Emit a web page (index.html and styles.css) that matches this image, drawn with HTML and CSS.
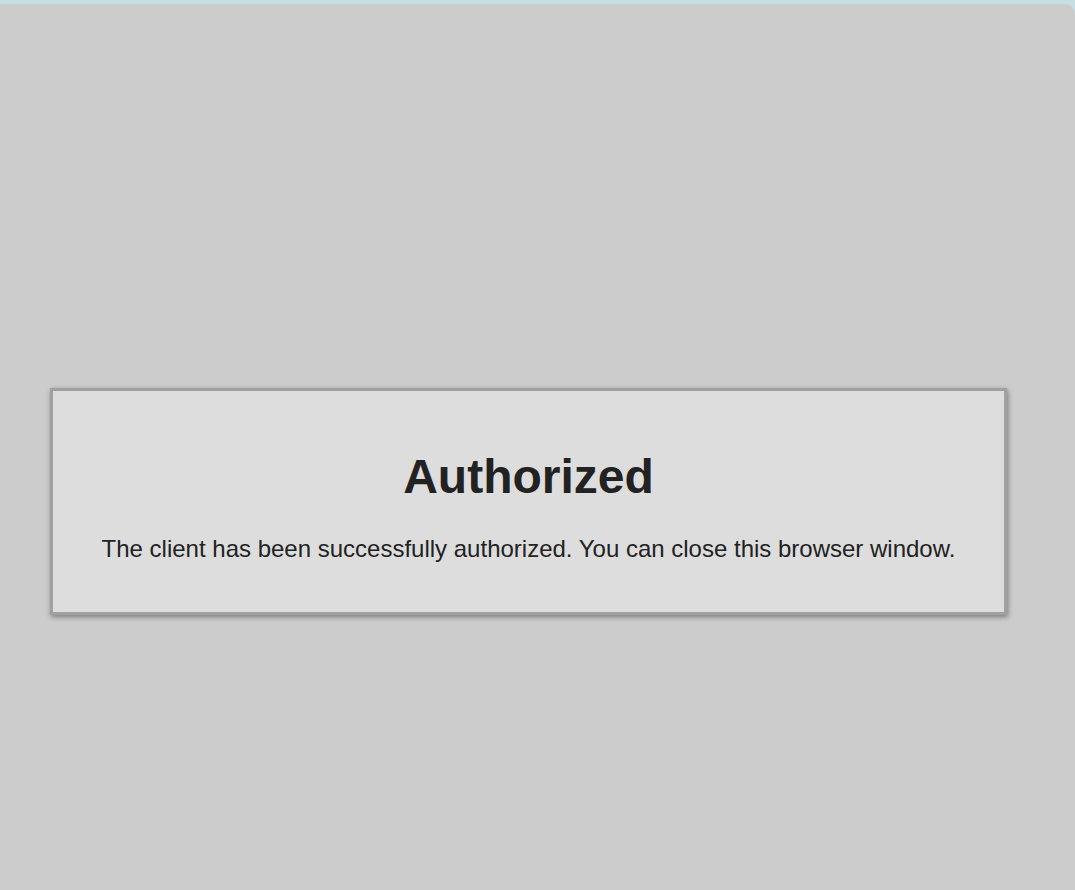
FILE: index.html
```html
<!DOCTYPE html>
<html lang="en">
<head>
<meta charset="utf-8">
<title>Authorized</title>
<link rel="stylesheet" href="styles.css">
</head>
<body>
<main class="panel">
  <section class="card">
    <h1 class="title">Authorized</h1>
    <p class="message">The client has been successfully authorized. You can close this browser window.</p>
  </section>
</main>
</body>
</html>
```
FILE: styles.css
```css
html, body {
  margin: 0;
  padding: 0;
  height: 100%;
}
body {
  background: #c6dfe2;
  font-family: "Liberation Sans", Arial, sans-serif;
  color: #222222;
  padding-top: 4px;
  box-sizing: border-box;
  overflow: hidden;
}
.panel {
  background: #cccccc;
  border-top-right-radius: 10px;
  height: 100%;
  box-sizing: border-box;
  padding: 384px 68px 0 50px;
}
.card {
  background: #dddddd;
  border: 3px solid #a0a0a0;
  box-shadow: 1px 2px 5px rgba(0, 0, 0, 0.4);
  height: 227px;
  box-sizing: border-box;
  text-align: center;
  padding-top: 58px;
}
.title {
  margin: 0;
  font-size: 48px;
  font-weight: bold;
  line-height: 56px;
}
.message {
  margin: 30px 0 0;
  font-size: 24px;
  line-height: 28px;
}
```
